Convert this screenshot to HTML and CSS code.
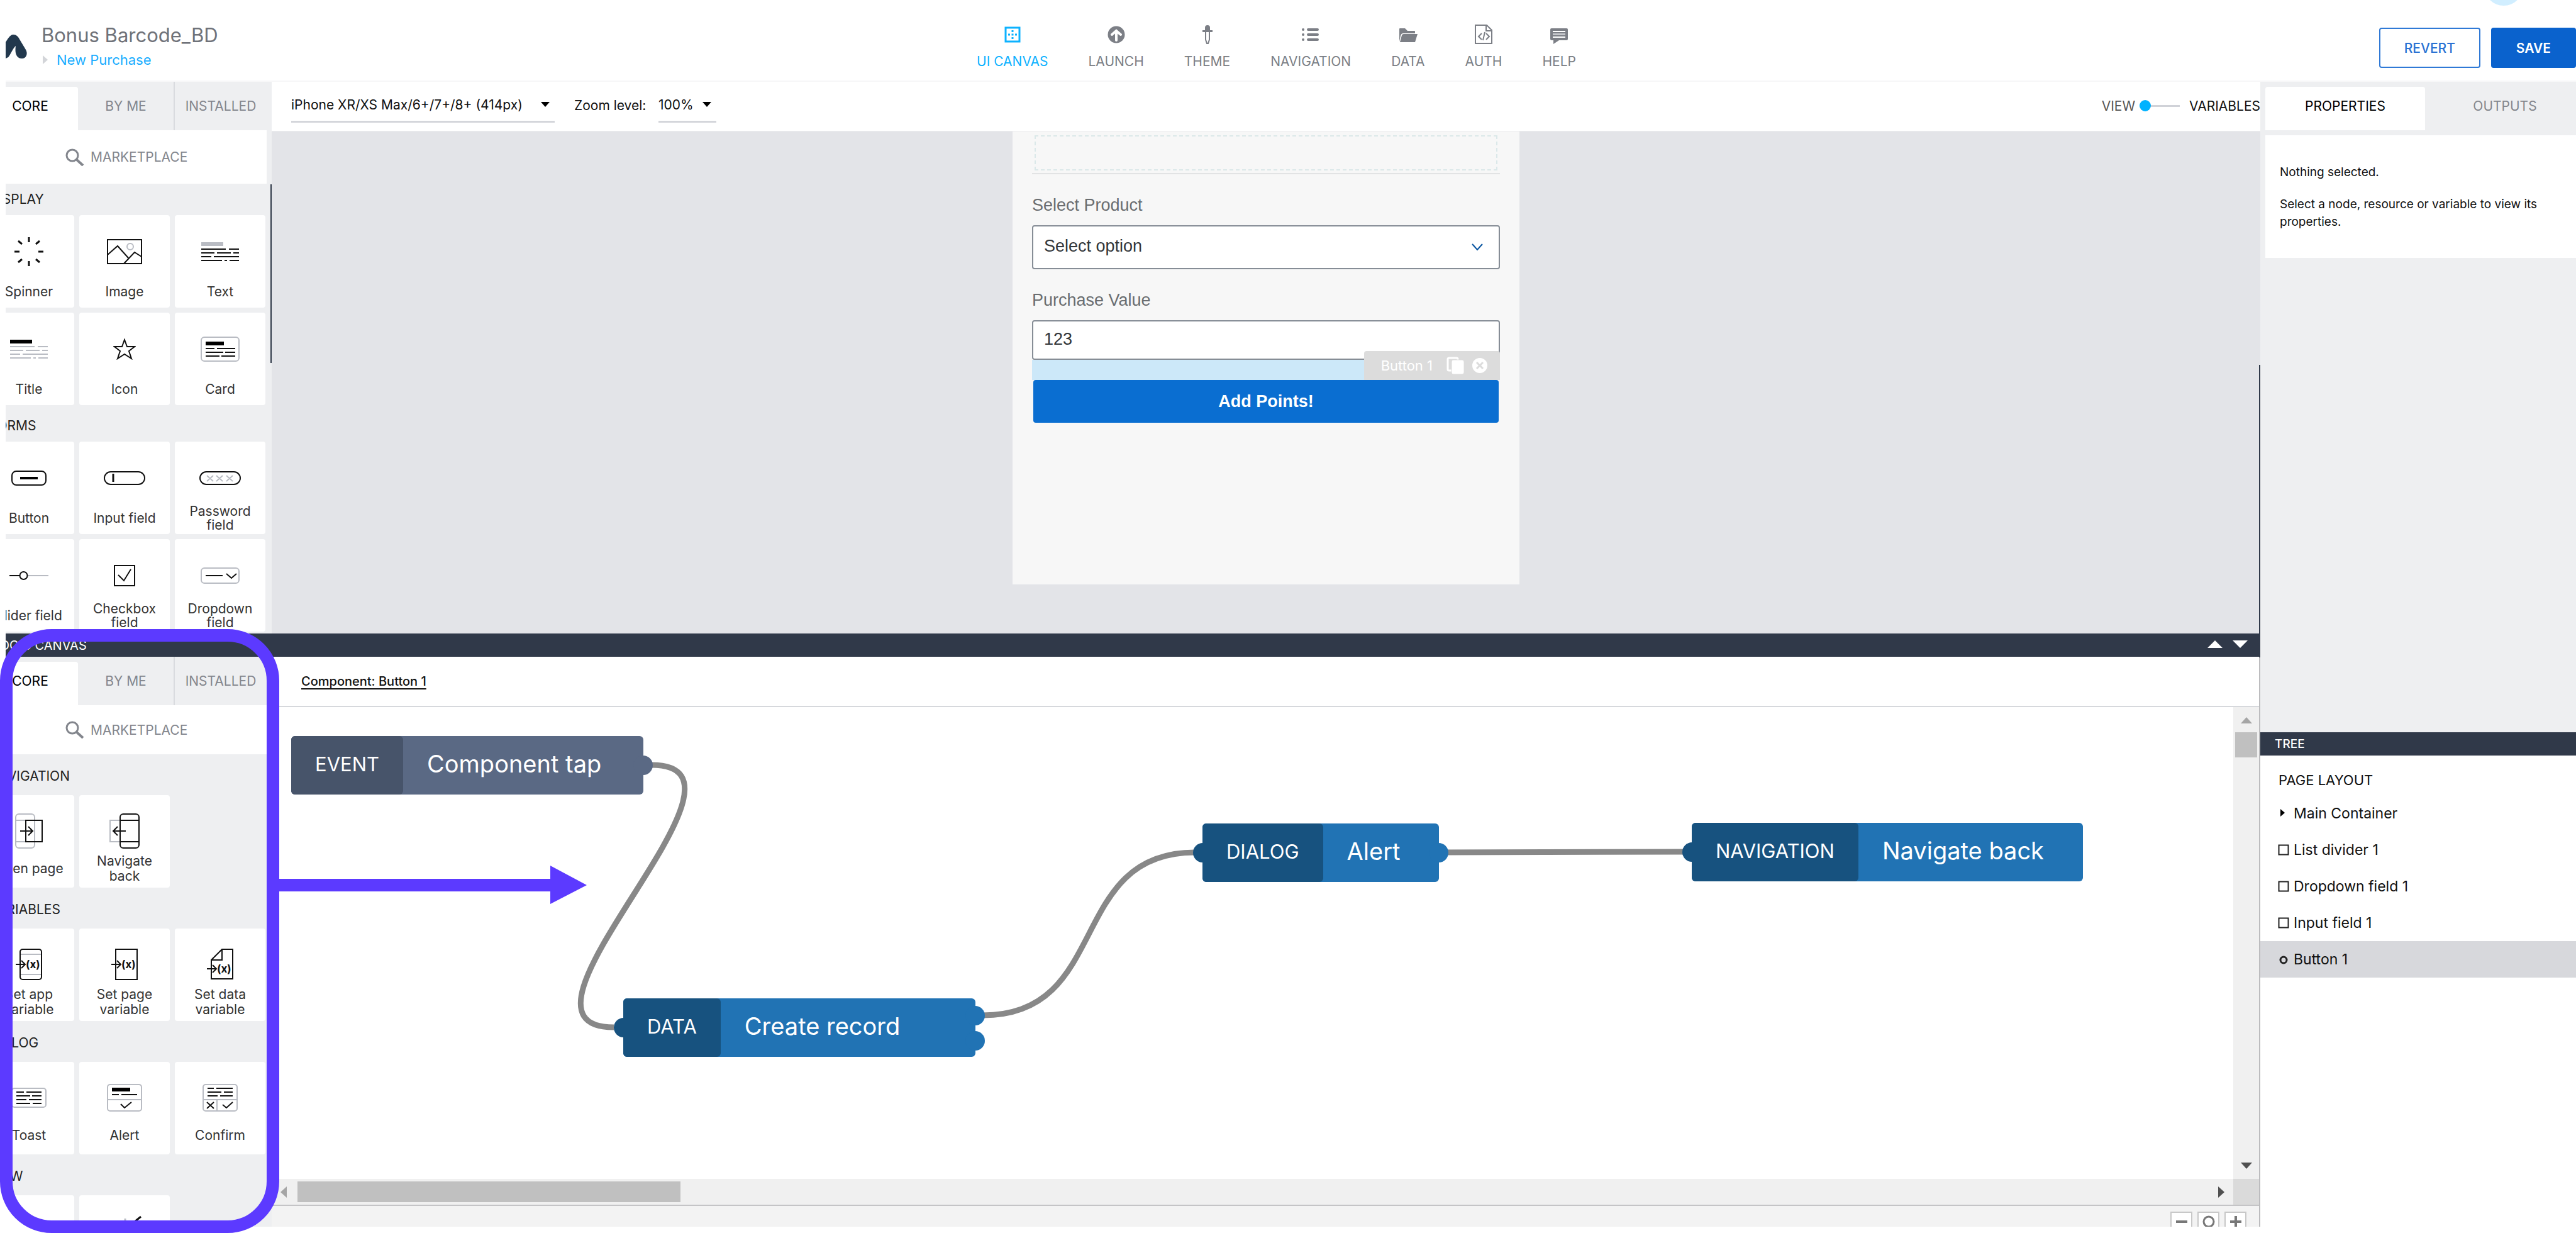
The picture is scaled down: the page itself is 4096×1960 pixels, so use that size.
FILE: index.html
```html
<!DOCTYPE html>
<html lang="en">
<head>
<meta charset="utf-8">
<title>Bonus Barcode_BD</title>
<link rel="stylesheet" href="styles.css">
</head>
<body>
<div class="app">
  <header class="header">
    <div class="brand">
      <svg class="logo" width="34" height="38" viewBox="0 0 34 38" aria-hidden="true"><path d="M0 12C5 4 8 0 12 0c5 0 8 3 11 9l9 15c4 7 0 14-6 14-8 0-12-7-10-20C11 22 8 32 4 36L0 38Z" fill="#22384d"/></svg>
      <div class="brand-text">
        <div class="brand-title">Bonus Barcode_BD</div>
        <div class="brand-page"><svg width="8" height="14" viewBox="0 0 8 14" aria-hidden="true"><path d="M0 0l8 7-8 7Z" fill="#d3d5d9"/></svg><a href="#page">New Purchase</a></div>
      </div>
    </div>
    <nav class="nav">
      <a class="nav-item active" href="#ui"><svg width="36" height="36" viewBox="0 0 36 36"><path d="M7 6h22v22H7Z" fill="none" stroke="currentColor" stroke-width="3"/><path d="M16.500 10h3v3h-3zM16.500 15.500h3v3h-3zM16.500 21h3v3h-3zM11 15.500h3v3h-3zM22 15.500h3v3h-3z" fill="currentColor"/></svg>UI CANVAS</a>
      <a class="nav-item" href="#launch"><svg width="36" height="36" viewBox="0 0 36 36"><circle cx="18" cy="17" r="13.500" fill="currentColor"/><path d="M18 26V12M11 17l7-6 7 6" fill="none" stroke="#fff" stroke-width="4" stroke-linecap="round"/></svg>LAUNCH</a>
      <a class="nav-item" href="#theme"><svg width="36" height="36" viewBox="0 0 36 36"><path d="M14 10V6q0-4 4-4t4 4v4h4v3H10v-3Z" fill="currentColor"/><path d="M15 12v13l2 6h2l2-6V12" fill="none" stroke="currentColor" stroke-width="2"/></svg>THEME</a>
      <a class="nav-item" href="#navigation"><svg width="36" height="36" viewBox="0 0 36 36"><path d="M14 9h15M14 17h15M14 25h15M6 9h.1M6 17h.1M6 25h.1" stroke="currentColor" stroke-width="4" stroke-linecap="round"/></svg>NAVIGATION</a>
      <a class="nav-item" href="#data"><svg width="36" height="36" viewBox="0 0 36 36"><path d="M4 28V8q0-1 1-1h8l4 4h11q1 0 1 1v3H10q-3 0-4 4Z" fill="currentColor"/><path d="M5 29L8 18q1-2 3-2h22l-4 13Z" fill="currentColor"/></svg>DATA</a>
      <a class="nav-item" href="#auth"><svg width="36" height="36" viewBox="0 0 36 36"><path d="M5 2h18l8 8v21H5ZM22 2v9h9M15 15l-5 5 5 5M22 15l5 5-5 5M20 13l-3 13" fill="none" stroke="currentColor" stroke-width="2"/></svg>AUTH</a>
      <a class="nav-item" href="#help"><svg width="36" height="36" viewBox="0 0 36 36"><path d="M6 7h24q2 0 2 2v15q0 2-2 2H18l-9 6V26H6q-2 0-2-2V9q0-2 2-2Z" fill="currentColor"/><path d="M8 12h20M8 21h20" stroke="#fff" stroke-width="2"/><path d="M8 16.500h20" stroke="#c4c6ca" stroke-width="3"/></svg>HELP</a>
    </nav>
    <div class="actions">
      <button class="btn btn-outline" type="button">REVERT</button>
      <button class="btn btn-solid" type="button">SAVE</button>
    </div>
    <span class="avatar"></span>
  </header>

  <main class="workspace">
    <section class="editor">
      <div class="pane">
        <aside class="sidebar">
          <div class="tabs">
            <button class="tab selected" type="button">CORE</button><button class="tab" type="button">BY ME</button><button class="tab" type="button">INSTALLED</button>
          </div>
          <a class="market" href="#market"><svg width="30" height="28" viewBox="0 0 30 28"><circle cx="11" cy="11" r="9" fill="none" stroke="currentColor" stroke-width="3"/><path d="M17 17l11 10" stroke="currentColor" stroke-width="4"/></svg>MARKETPLACE</a>
          <div class="library">
            <h2 class="group">DISPLAY</h2>
            <div class="cards">
              <button class="card" type="button"><span class="card-icon"><svg width="46" height="46" viewBox="0 0 46 46" stroke="#111" stroke-width="3"><path d="M23 0v8M23 38v8M0 23h8M38 23h8M6 6l6 5M40 6l-6 5M6 40l6-5M40 40l-6-5"/></svg></span><span class="card-label">Spinner</span></button>
              <button class="card" type="button"><span class="card-icon"><svg width="56" height="40" viewBox="0 0 56 40" fill="none" stroke="#111" stroke-width="2"><path d="M1 1h54v38H1ZM1 25l16-14 17 19M27 39l17-18 11 7"/><circle cx="37" cy="12" r="5" stroke="#b9bcc3"/></svg></span><span class="card-label">Image</span></button>
              <button class="card" type="button"><span class="card-icon"><svg width="60" height="32" viewBox="0 0 60 32" stroke="#111" stroke-width="2"><path d="M0 4h35" stroke="#b9bcc3" stroke-width="6"/><path d="M0 12h39M44 12h16M0 18h21M25 18h22M51 18h9M0 24h16M20 24h40M0 30h33M37 30h4M45 30h15"/></svg></span><span class="card-label">Text</span></button>
              <button class="card" type="button"><span class="card-icon"><svg width="60" height="32" viewBox="0 0 60 32" stroke="#b9bcc3" stroke-width="2"><path d="M0 4h35" stroke="#000" stroke-width="6"/><path d="M0 12h39M44 12h16M0 18h21M25 18h22M51 18h9M0 24h16M20 24h40M0 30h33M37 30h4M45 30h15"/></svg></span><span class="card-label">Title</span></button>
              <button class="card" type="button"><span class="card-icon"><svg width="36" height="34" viewBox="0 0 36 34"><path d="M18 2l4 11h12l-9 7 4 12-11-7-11 7 4-12-9-7h12Z" fill="none" stroke="#111" stroke-width="2"/></svg></span><span class="card-label">Icon</span></button>
              <button class="card" type="button"><span class="card-icon"><svg width="62" height="40" viewBox="0 0 62 40" fill="none" stroke="#111" stroke-width="2"><rect x="1" y="1" width="60" height="38" rx="5" stroke="#b9bcc3"/><path d="M8 11h29" stroke="#000" stroke-width="6"/><path d="M8 19h14M26 19h29M8 25h28M39 25h16M8 31h22M33 31h22"/></svg></span><span class="card-label">Card</span></button>
            </div>
            <h2 class="group">FORMS</h2>
            <div class="cards">
              <button class="card" type="button"><span class="card-icon"><svg width="56" height="24" viewBox="0 0 56 24" fill="none" stroke="#111" stroke-width="2"><rect x="1" y="1" width="54" height="22" rx="7"/><path d="M14 12h28" stroke="#000" stroke-width="4"/></svg></span><span class="card-label">Button</span></button>
              <button class="card" type="button"><span class="card-icon"><svg width="66" height="22" viewBox="0 0 66 22" fill="none" stroke="#111" stroke-width="2"><rect x="1" y="1" width="64" height="20" rx="10"/><path d="M15 4v13" stroke-width="3"/></svg></span><span class="card-label">Input field</span></button>
              <button class="card" type="button"><span class="card-icon"><svg width="66" height="22" viewBox="0 0 66 22" fill="none" stroke="#111" stroke-width="2"><rect x="1" y="1" width="64" height="20" rx="10"/><path d="M12 7l10 9M12 16l10-9M27 7l10 9M27 16l10-9M43 7l10 9M43 16l10-9" stroke="#b9bcc3"/></svg></span><span class="card-label">Password<br>field</span></button>
              <button class="card" type="button"><span class="card-icon"><svg width="62" height="16" viewBox="0 0 62 16" fill="none" stroke="#111" stroke-width="2"><path d="M29 8h33" stroke="#b9bcc3"/><path d="M0 8h16"/><circle cx="22.500" cy="8" r="6"/></svg></span><span class="card-label">Slider field</span></button>
              <button class="card" type="button"><span class="card-icon"><svg width="34" height="34" viewBox="0 0 34 34" fill="none" stroke="#111" stroke-width="2"><path d="M1 1h32v32H1ZM7 16l9 9L27 7"/></svg></span><span class="card-label">Checkbox<br>field</span></button>
              <button class="card" type="button"><span class="card-icon"><svg width="62" height="26" viewBox="0 0 62 26" fill="none" stroke="#111" stroke-width="2"><rect x="1" y="1" width="60" height="24" rx="5" stroke="#b9bcc3"/><path d="M8 13h27M41 10l8 7 8-7"/></svg></span><span class="card-label">Dropdown<br>field</span></button>
            </div>
          </div>
          <span class="scroll-mark"></span>
        </aside>
        <div class="stage-col">
          <div class="toolbar">
            <label class="pick pick-device"><select aria-label="Device"><option>iPhone XR/XS Max/6+/7+/8+ (414px)</option></select><svg width="14" height="8" viewBox="0 0 14 8"><path d="M0 0h14L7 8Z"/></svg></label>
            <label class="pick-name" for="zoom">Zoom level:</label>
            <div class="pick pick-zoom"><select id="zoom"><option>100%</option></select><svg width="14" height="8" viewBox="0 0 14 8"><path d="M0 0h14L7 8Z"/></svg></div>
            <div class="mode">
              <label class="mode-view" for="mode">VIEW</label>
              <input id="mode" type="range" min="0" max="1" value="0">
              <span>VARIABLES</span>
            </div>
          </div>
          <div class="stage">
            <div class="phone">
              <div class="dropzone"></div>
              <label class="field-name" for="product">Select Product</label>
              <div class="field"><select id="product"><option>Select option</option></select><svg width="18" height="12" viewBox="0 0 18 12"><path d="M1 1l8 9 8-9" fill="none" stroke="#0854a0" stroke-width="2"/></svg></div>
              <label class="field-name" for="value">Purchase Value</label>
              <input class="field-input" id="value" type="text" value="123">
              <div class="margin-strip">
                <div class="tag"><span>Button 1</span>
                  <svg width="28" height="28" viewBox="0 0 28 28"><rect x="2" y="2" width="16" height="20" rx="2" fill="none" stroke="#fff" stroke-width="3"/><rect x="8" y="5" width="20" height="23" rx="3" fill="#fff" stroke="#dcdcdc" stroke-width="1"/></svg>
                  <svg width="26" height="26" viewBox="0 0 26 26"><circle cx="13" cy="13" r="12" fill="#fff"/><path d="M8 8l10 10M18 8L8 18" stroke="#dcdcdc" stroke-width="3"/></svg>
                </div>
              </div>
              <button class="cta" type="button">Add Points!</button>
            </div>
          </div>
        </div>
      </div>

      <div class="logic-bar"><span class="logic-title">LOGIC CANVAS</span>
        <svg width="64" height="12" viewBox="0 0 64 12"><path d="M0 12h24L12 0ZM40 0h24L52 12Z" fill="#fff"/></svg>
      </div>

      <div class="pane pane-logic">
        <aside class="sidebar">
          <div class="tabs">
            <button class="tab selected" type="button">CORE</button><button class="tab" type="button">BY ME</button><button class="tab" type="button">INSTALLED</button>
          </div>
          <a class="market" href="#market"><svg width="30" height="28" viewBox="0 0 30 28"><circle cx="11" cy="11" r="9" fill="none" stroke="currentColor" stroke-width="3"/><path d="M17 17l11 10" stroke="currentColor" stroke-width="4"/></svg>MARKETPLACE</a>
          <div class="library">
            <h2 class="group">NAVIGATION</h2>
            <div class="cards">
              <button class="card" type="button"><span class="card-icon"><svg width="44" height="56" viewBox="0 0 44 56" fill="none" stroke="#111" stroke-width="2"><g stroke="#b9bcc3"><rect x="1" y="1" width="30" height="54" rx="5"/><path d="M1 11h30M1 45h30"/></g><path d="M17 11h26v34H17ZM8 28h19M21 21l7 7-7 7"/></svg></span><span class="card-label">Open page</span></button>
              <button class="card" type="button"><span class="card-icon"><svg width="48" height="56" viewBox="0 0 48 56" fill="none" stroke="#111" stroke-width="2"><path d="M17 11H1v34h16" stroke="#b9bcc3"/><rect x="17" y="1" width="30" height="54" rx="5"/><path d="M17 11h30M17 45h30M26 28H6M13 21l-7 7 7 7"/></svg></span><span class="card-label">Navigate<br>back</span></button>
            </div>
            <h2 class="group">VARIABLES</h2>
            <div class="cards">
              <button class="card" type="button"><span class="card-icon"><svg width="42" height="50" viewBox="0 0 42 50" fill="none" stroke="#111" stroke-width="2"><rect x="7" y="1" width="34" height="48" rx="4"/><path d="M8 9h32M8 41h32" stroke="#b9bcc3"/><path d="M0 25h14M9 19l6 6-6 6"/><text x="16" y="31" class="fx">(x)</text></svg></span><span class="card-label">Set app<br>variable</span></button>
              <button class="card" type="button"><span class="card-icon"><svg width="42" height="50" viewBox="0 0 42 50" fill="none" stroke="#111" stroke-width="2"><rect x="7" y="1" width="34" height="48"/><path d="M0 25h14M9 19l6 6-6 6"/><text x="16" y="31" class="fx">(x)</text></svg></span><span class="card-label">Set page<br>variable</span></button>
              <button class="card" type="button"><span class="card-icon"><svg width="42" height="50" viewBox="0 0 42 50" fill="none" stroke="#111" stroke-width="2"><path d="M7 18v30h34V1H24ZM7 18h17V1M0 32h14M9 26l6 6-6 6"/><text x="16" y="38" class="fx">(x)</text></svg></span><span class="card-label">Set data<br>variable</span></button>
            </div>
            <h2 class="group">DIALOG</h2>
            <div class="cards">
              <button class="card" type="button"><span class="card-icon"><svg width="56" height="32" viewBox="0 0 56 32" fill="none" stroke="#111" stroke-width="2"><rect x="1" y="1" width="54" height="30" rx="4" stroke="#b9bcc3"/><path d="M8 7h12M24 7h24M8 13h22M33 13h15M8 19h16M28 19h20M8 25h22M34 25h14"/></svg></span><span class="card-label">Toast</span></button>
              <button class="card" type="button"><span class="card-icon"><svg width="56" height="44" viewBox="0 0 56 44" fill="none" stroke="#111" stroke-width="2"><rect x="1" y="1" width="54" height="42" rx="4" stroke="#b9bcc3"/><path d="M1 25h54" stroke="#b9bcc3"/><path d="M8 9h29" stroke="#000" stroke-width="6"/><path d="M8 17h11M23 17h25M22 32l6 6 11-9"/></svg></span><span class="card-label">Alert</span></button>
              <button class="card" type="button"><span class="card-icon"><svg width="56" height="44" viewBox="0 0 56 44" fill="none" stroke="#111" stroke-width="2"><rect x="1" y="1" width="54" height="42" rx="4" stroke="#b9bcc3"/><path d="M1 25h54M23 25v18" stroke="#b9bcc3"/><path d="M8 7h10M22 7h26M8 13h22M34 13h14M8 19h16M28 19h20M7 29l11 10M18 29L7 39M32 33l6 5 10-9"/></svg></span><span class="card-label">Confirm</span></button>
            </div>
            <h2 class="group">VIEW</h2>
            <div class="cards">
              <button class="card" type="button"><span class="card-icon"></span><span class="card-label">Hide</span></button>
              <button class="card" type="button"><span class="card-icon"><svg width="56" height="50" viewBox="0 0 56 50" fill="none" stroke="#111" stroke-width="3"><path d="M29 5v14" stroke="#b9bcc3"/><path d="M54 2L14 34"/></svg></span><span class="card-label">Show</span></button>
            </div>
          </div>
        </aside>
        <div class="logic-col">
          <div class="crumb"><a href="#component">Component: Button 1</a></div>
          <div class="flow-area">
            <div class="flow">
              <svg class="links" width="3119" height="751" fill="none" stroke="#888" stroke-width="9"><path d="M604 92C808 92 340 509 544 509M1131 490C1335 490 1264 231 1468 231M1855 231L2248 230"/></svg>
              <div class="node event" style="left:31px;top:46px"><i class="port out"></i><b>EVENT</b><span>Component tap</span></div>
              <div class="node wide" style="left:559px;top:463px"><i class="port in"></i><i class="port out first"></i><i class="port out second"></i><b>DATA</b><span>Create record</span></div>
              <div class="node" style="left:1480px;top:185px"><i class="port in"></i><i class="port out"></i><b>DIALOG</b><span>Alert</span></div>
              <div class="node" style="left:2258px;top:184px"><i class="port in"></i><b>NAVIGATION</b><span>Navigate back</span></div>
            </div>
            <div class="vbar"><svg width="18" height="10" viewBox="0 0 18 10"><path d="M0 10h18L9 0Z" fill="#a5a5a5"/></svg><i></i><svg class="end" width="18" height="10" viewBox="0 0 18 10"><path d="M0 0h18L9 10Z" fill="#505050"/></svg></div>
            <div class="hbar"><svg width="10" height="18" viewBox="0 0 10 18"><path d="M10 0v18L0 9Z" fill="#a5a5a5"/></svg><i></i><svg class="end" width="10" height="18" viewBox="0 0 10 18"><path d="M0 0v18l10-9Z" fill="#505050"/></svg></div>
            <div class="corner"></div>
          </div>
          <div class="zoombar">
            <button type="button" aria-label="Zoom out"><svg width="20" height="20" viewBox="0 0 20 20" stroke="#777" stroke-width="4" fill="none"><path d="M1 10h18"/></svg></button>
            <button type="button" aria-label="Reset zoom"><svg width="20" height="20" viewBox="0 0 20 20" stroke="#777" stroke-width="3" fill="none"><circle cx="10" cy="10" r="8"/></svg></button>
            <button type="button" aria-label="Zoom in"><svg width="20" height="20" viewBox="0 0 20 20" stroke="#777" stroke-width="4" fill="none"><path d="M1 10h18M10 1v18"/></svg></button>
          </div>
        </div>
      </div>
      <svg class="callout" width="933" height="960" viewBox="0 0 933 960" fill="none" stroke="#5c3aff" stroke-width="20"><rect x="10" y="10" width="424" height="940" rx="72"/><path d="M434 407h445"/><path d="M875 376l58 31-58 30Z" fill="#5c3aff" stroke="none"/></svg>
    </section>

    <aside class="inspector">
      <div class="props">
        <div class="tabs"><button class="tab selected" type="button">PROPERTIES</button><button class="tab" type="button">OUTPUTS</button></div>
        <div class="props-body"><p>Nothing selected.</p><p>Select a node, resource or variable to view its properties.</p></div>
        <span class="scroll-mark"></span>
      </div>
      <div class="tree">
        <h2 class="tree-bar">TREE</h2>
        <h3 class="tree-head">PAGE LAYOUT</h3>
        <ul>
          <li><svg width="18" height="18" viewBox="0 0 18 18"><path d="M4 2v12l7-6Z"/></svg>Main Container</li>
          <li><svg width="18" height="18" viewBox="0 0 18 18"><path d="M1.500 1.500h15v15h-15Z" fill="none" stroke="#222" stroke-width="2"/></svg>List divider 1</li>
          <li><svg width="18" height="18" viewBox="0 0 18 18"><path d="M1.500 1.500h15v15h-15Z" fill="none" stroke="#222" stroke-width="2"/></svg>Dropdown field 1</li>
          <li><svg width="18" height="18" viewBox="0 0 18 18"><path d="M1.500 1.500h15v15h-15Z" fill="none" stroke="#222" stroke-width="2"/></svg>Input field 1</li>
          <li class="current"><svg width="18" height="18" viewBox="0 0 18 18"><circle cx="9" cy="10" r="5" fill="none" stroke="#222" stroke-width="3"/></svg>Button 1</li>
        </ul>
      </div>
    </aside>
  </main>
</div>
</body>
</html>
```
FILE: styles.css
```css
* { box-sizing: border-box; }
html, body { height: 100%; }
body { margin: 0; background: #fff; color: #111; font-family: Inter, "Liberation Sans", sans-serif; font-size: 21px; overflow: hidden; }
button, select, input { font: inherit; color: inherit; margin: 0; }
button { border: 0; background: none; padding: 0; }
a { color: inherit; text-decoration: none; }
h2, h3, p, ul { margin: 0; padding: 0; font-weight: 400; font-size: inherit; list-style: none; }
svg { flex: none; display: block; }

.app { height: calc(100vh - 10px); padding-left: 9px; display: grid; grid-template-rows: 130px minmax(0, 1fr); }

/* Header */
.header { position: relative; display: grid; grid-template-columns: 1fr auto 1fr; align-items: start; border-bottom: 2px solid #f7f7f8; overflow: hidden; }
.brand { display: flex; gap: 23px; padding-top: 38px; }
.logo { margin-top: 17px; }
.brand-text { display: flex; flex-direction: column; gap: 7px; }
.brand-title { font-size: 31px; line-height: 36px; color: #6f7279; }
.brand-page { display: flex; align-items: center; gap: 14px; line-height: 28px; color: #18adff; font-size: 22px; padding-left: 2px; }
.nav { display: flex; gap: 64px; padding: 38px 46px 0 0; }
.nav-item { display: flex; flex-direction: column; align-items: center; gap: 10px; line-height: 28px; color: #7c7f86; }
.nav-item.active { color: #0db2ff; }
.actions { display: flex; justify-content: flex-end; gap: 17px; padding-top: 44px; }
.btn { height: 64px; padding: 0 38px; border: 2px solid #0a62cd; border-radius: 4px; font-weight: 500; }
.btn-outline { color: #2a72d3; border-color: #2f79d6; }
.btn-solid { background: #0a62cd; color: #fff; font-weight: 600; }
.avatar { position: absolute; right: 84px; top: -53px; width: 62px; height: 62px; border-radius: 50%; background: #d1eeff; }

/* Panes */
.workspace { display: grid; grid-template-columns: minmax(0, 1fr) 502px; min-height: 0; }
.editor { position: relative; display: grid; grid-template-rows: minmax(0, 877fr) 37px minmax(0, 906fr); min-height: 0; }
.pane { display: grid; grid-template-columns: 423px minmax(0, 1fr); min-height: 0; }
.sidebar { position: relative; background: #eeeff1; overflow: hidden; min-height: 0; }
.tabs { display: grid; grid-template-columns: repeat(3, 152px); height: 77px; padding-top: 8px; margin-left: -37px; }
.tab { color: #83868d; line-height: 24px; padding-bottom: 8px; }
.tab.selected { background: #fff; color: #000; border-radius: 4px 4px 0 0; }
.tab + .tab + .tab { border-left: 2px solid #d9dbdf; margin-top: -8px; padding: 0 4px 0 0; }
.market { display: flex; align-items: center; height: 85px; margin-right: 8px; padding-left: 95px; gap: 10px; background: #fff; color: #83868d; }
.pane-logic .market { height: 78px; }
.library { margin-left: -35px; }
.group { height: 50px; padding-left: 9px; line-height: 50px; color: #222; }
.cards { display: grid; grid-template-columns: repeat(3, 144px); gap: 8px; padding-bottom: 8px; }
.card { display: flex; flex-direction: column; height: 147px; padding: 16px 0 3px; background: #fff; border-radius: 4px; color: #333; }
.card-icon { flex: 1; align-self: stretch; display: flex; align-items: center; justify-content: center; }
.card-label { align-self: stretch; display: flex; align-items: center; justify-content: center; text-align: center; height: 44px; line-height: 22px; }
.pane-logic .library { padding-top: 8px; }
.pane-logic .group { height: 57px; line-height: 54px; }
.pane-logic .card { padding: 20px 0 6px; }
.pane-logic .card-label { height: 48px; line-height: 24px; }
.fx { font-size: 17px; font-weight: 700; fill: #111; stroke: none; }
.scroll-mark { position: absolute; right: 0; top: 163px; width: 2px; height: 284px; background: #303949; }

/* Stage */
.stage-col { display: flex; flex-direction: column; min-height: 0; }
.toolbar { display: flex; align-items: flex-start; height: 79px; padding: 0 0 0 31px; border-bottom: 1px solid #ececef; }
.pick { position: relative; display: block; height: 65px; border-bottom: 3px solid #d4d6db; }
.pick select { appearance: none; width: 100%; height: 100%; padding: 11px 0 0; border: 0; background: transparent; line-height: 26px; }
.pick svg { position: absolute; right: 8px; top: 32px; }
.pick-device { width: 419px; margin-right: 31px; }
.pick-zoom { width: 92px; }
.pick-name { width: 134px; line-height: 76px; }
.mode { display: flex; align-items: center; height: 76px; margin-left: auto; }
.mode-view { color: #555; }
.mode input { appearance: none; width: 64px; height: 18px; margin: 0 15px 0 7px; background: linear-gradient(#d0d2d8, #d0d2d8) center / 100% 3px no-repeat; }
.mode input::-webkit-slider-thumb { appearance: none; width: 18px; height: 18px; border-radius: 50%; background: #00b2ff; }
.stage { flex: 1; min-height: 0; background: #e3e4e8; }
.phone { width: 806px; height: 720px; margin: 0 auto; padding: 6px 31px 0; background: #f7f7f7; display: flex; flex-direction: column; font-family: "Liberation Sans", Arial, sans-serif; font-size: 27px; }
.dropzone { position: relative; height: 62px; border-bottom: 2px solid #e2e3e4; flex: none; }
.dropzone::before { content: ""; position: absolute; inset: 0 4px 4px; border: 2px dashed #dbe8e9; }
.field-name { margin: 33px 0 16px; line-height: 32px; color: #6a6d70; }
.field { position: relative; height: 70px; }
.field select, .field-input { appearance: none; width: 100%; height: 100%; padding: 0 17px 4px; border: 2px solid #868d96; border-radius: 4px; background: #fff; color: #32363a; outline: 0; }
.field-input { height: 63px; padding-bottom: 2px; flex: none; }
.field svg { position: absolute; right: 27px; top: 29px; }
.margin-strip { position: relative; height: 32px; background: #cce8f9; flex: none; }
.tag { position: absolute; right: 0; bottom: 0; display: flex; align-items: center; height: 46px; padding: 0 19px 0 27px; gap: 12px; background: #dcdcdc; border-radius: 4px 4px 0 0; color: #fff; font: 22px Inter, sans-serif; }
.tag span { padding-right: 10px; }
.cta { height: 68px; margin: 0 2px; border-radius: 4px; background: #0a6ed1; color: #fff; font-weight: 700; flex: none; }

/* Logic canvas */
.logic-bar { display: flex; align-items: center; justify-content: space-between; background: #303949; color: #fff; padding-right: 20px; overflow: hidden; font-size: 20px; }
.logic-title { margin-left: -20px; }
.logic-bar svg { margin-bottom: 3px; }
.logic-col { display: flex; flex-direction: column; min-width: 0; min-height: 0; border-right: 2px solid #bcbcbe; }
.crumb { height: 80px; padding-left: 47px; line-height: 78px; border-bottom: 2px solid #d6d8dc; font-size: 20px; font-weight: 500; flex: none; }
.crumb a { text-decoration: underline; text-underline-offset: 4px; }
.flow-area { flex: 1; display: grid; grid-template-columns: minmax(0, 1fr) 41px; grid-template-rows: minmax(0, 1fr) 41px; min-height: 0; }
.flow { position: relative; overflow: hidden; }
.links { position: absolute; left: 0; top: 0; }
.node { position: absolute; display: flex; height: 93px; line-height: 89px; color: #fff; background: #2173b4; border-radius: 6px; }
.node.event { background: #5a6984; }
.node b { position: relative; padding: 0 38px; background: #17527f; border-radius: 6px; font-size: 31px; font-weight: 400; }
.node.event b { background: #47546a; }
.node span { padding: 0 62px 0 38px; font-size: 38px; }
.node.event, .node.wide { min-width: 560px; }
.port { position: absolute; top: 31px; width: 31px; height: 31px; border-radius: 50%; background: inherit; }
.port.in { left: -15px; background: #17527f; }
.port.out { right: -15px; }
.port.first { top: 12px; }
.port.second { top: 52px; }
.vbar { display: flex; flex-direction: column; align-items: center; padding: 16px 0; background: #f0f0f0; }
.vbar i { width: 35px; height: 40px; margin-top: 14px; background: #c0c0c0; }
.vbar .end { margin-top: auto; }
.hbar { display: flex; align-items: center; padding: 0 14px; background: #f0f0f0; }
.hbar i { width: 609px; height: 33px; margin-left: 17px; background: #c0c0c0; }
.hbar .end { margin-left: auto; }
.corner { background: #dadada; }
.zoombar { display: flex; justify-content: flex-end; gap: 8px; height: 35px; padding: 9px 20px 0 0; border-top: 2px solid #c4c4c6; background: #f3f3f3; overflow: hidden; flex: none; }
.zoombar button { width: 35px; height: 34px; border: 2px solid #c8c8c8; background: #fff; display: flex; justify-content: center; padding-top: 4px; flex: none; }
.callout { position: absolute; left: -9px; bottom: -10px; pointer-events: none; }

/* Inspector */
.inspector { display: grid; grid-template-rows: minmax(0, 1034fr) minmax(0, 786fr); min-height: 0; }
.props { position: relative; background: #eeeff1; min-width: 0; }
.inspector .tabs { grid-template-columns: 254px 254px; margin-left: 8px; }
.props-body { margin: 8px 0 0 8px; height: 195px; padding: 45px 23px 0; background: #fff; font-size: 19px; line-height: 28px; }
.props-body p + p { margin-top: 23px; }
.props .scroll-mark { left: -2px; top: 450px; height: 465px; }
.tree-bar { height: 37px; padding-left: 23px; line-height: 37px; background: #303949; color: #fff; font-size: 19px; font-weight: 500; }
.tree-head { height: 63px; padding: 15px 0 0 29px; line-height: 48px; font-size: 22px; }
.tree li { display: flex; align-items: center; gap: 7px; height: 58px; padding-left: 28px; font-size: 23px; }
.tree li.current { background: #d7d8dc; }
```
